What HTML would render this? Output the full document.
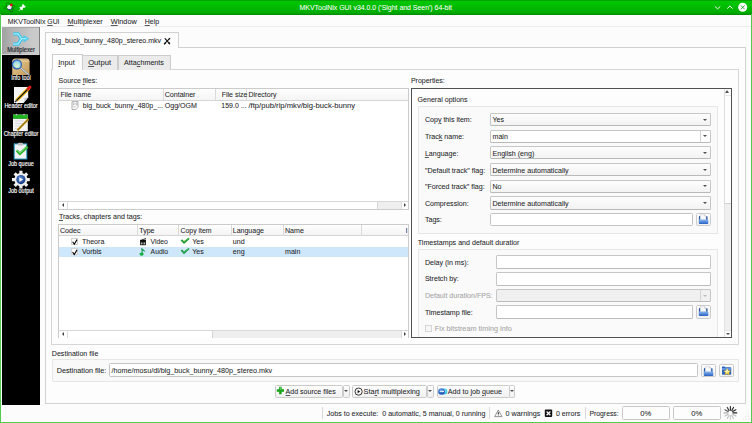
<!DOCTYPE html>
<html><head><meta charset="utf-8">
<style>
*{margin:0;padding:0;box-sizing:border-box}
html,body{width:752px;height:423px;overflow:hidden;background:#fcfcfc;font-family:"Liberation Sans",sans-serif;font-size:7.1px;color:#232527}
.t{-webkit-text-stroke:0.05px currentColor}
div,span{position:absolute}
.t{white-space:pre;line-height:11px;height:11px}
.w{color:#fff}
.b{border:1px solid #c9c9c9}
u{text-decoration-color:#555;text-underline-offset:1px}
.arr{width:0;height:0;border-left:2.3px solid transparent;border-right:2.3px solid transparent;border-top:2.6px solid #505050}
.dis2{border-top-color:#bbb}
.dis{color:#a4a4a4}
.btn{border:1px solid #cbcbcb;border-radius:1.5px;background:linear-gradient(#fdfdfd,#f1f1f1)}
.arru{width:0;height:0;border-left:2.5px solid transparent;border-right:2.5px solid transparent;border-bottom:3px solid #555}
.sl{font-size:6.6px;text-align:center;transform:scaleX(0.83);transform-origin:30px 0;-webkit-text-stroke:0.15px currentColor}
.arrl{width:0;height:0;border-top:2px solid transparent;border-bottom:2px solid transparent;border-right:2.5px solid #444}
.arrr{width:0;height:0;border-top:2px solid transparent;border-bottom:2px solid transparent;border-left:2.5px solid #444}
.fold{width:9px;height:8px}
</style></head><body>

<!-- title bar -->
<div style="left:0;top:0;width:752px;height:15px;background:linear-gradient(#00a000 0px,#00a400 1px,#00c600 1.5px,#00c200 4px,#00aa00 13px,#009200 14px,#008c00 15px)"></div>
<div class="t w" style="left:299.6px;top:2px;font-size:6.93px">MKVToolNix GUI v34.0.0 ('Sight and Seen') 64-bit</div>

<!-- green frame -->
<div style="left:0;top:14px;width:1px;height:409px;background:#52cd52"></div>
<div style="left:751px;top:14px;width:1px;height:409px;background:#52cd52"></div>
<div style="left:0;top:422px;width:752px;height:1px;background:#52cd52"></div>

<!-- menu -->
<div class="t" style="left:7.8px;top:15.7px;font-size:6.9px">MKVToolNix <u>G</u>UI</div>
<div class="t" style="left:67.5px;top:15.7px;font-size:7.3px"><u>M</u>ultiplexer</div>
<div class="t" style="left:110.8px;top:15.7px;font-size:7.3px"><u>W</u>indow</div>
<div class="t" style="left:144.7px;top:15.7px;font-size:7px"><u>H</u>elp</div>

<div style="left:1px;top:26px;width:750px;height:1px;background:#ededed"></div>
<!-- sidebar -->
<div style="left:2px;top:27px;width:38px;height:378px;background:#000"></div>
<div style="left:2px;top:27px;width:38px;height:28px;background:linear-gradient(90deg,#a0a0a0,#b2b2b2 25%,#c9c9c9 80%,#cccccc)"></div><div style="left:2px;top:54px;width:37px;height:1px;background:#cfcfcf"></div>
<div style="left:39px;top:27px;width:1px;height:28px;background:#7d7d7d"></div><div style="left:2px;top:27px;width:37px;height:1px;background:#a8a8a8"></div>

<!-- document tab -->
<div style="left:45px;top:32px;width:134px;height:16px;background:#fdfdfd;border:1px solid #d2d2d2;border-bottom:none"></div>
<div style="left:45px;top:47px;width:701px;height:357px;border:1px solid #d2d2d2;background:#fdfdfd"></div>
<div style="left:46px;top:46px;width:132px;height:2px;background:#fdfdfd"></div>
<div class="t" style="left:51.8px;top:35.4px;font-size:7.05px">big_buck_bunny_480p_stereo.mkv</div>


<!-- inner tabs -->
<div style="left:51px;top:69px;width:688px;height:275.5px;border:1px solid #d6d6d6;background:#fdfdfd"></div>
<div style="left:82px;top:55px;width:36px;height:14.5px;border:1px solid #cdcdcd;border-bottom:none;background:#ebebeb"></div>
<div style="left:117.5px;top:55px;width:53.5px;height:14.5px;border:1px solid #cdcdcd;border-bottom:none;background:#ebebeb"></div>
<div style="left:51.5px;top:54px;width:31px;height:16px;border:1px solid #cdcdcd;border-bottom:none;background:#fdfdfd"></div>
<div class="t" style="left:58.3px;top:57px;font-size:7.4px"><u>I</u>nput</div>
<div class="t" style="left:88.2px;top:57px;font-size:7.6px"><u>O</u>utput</div>
<div class="t" style="left:124px;top:57px;font-size:7.2px">Atta<u>c</u>hments</div>

<!-- source files -->
<div class="t" style="left:58.6px;top:75px;font-size:7px">Source <u>f</u>iles:</div>
<div style="left:58px;top:88px;width:351px;height:121.5px;border:1px solid #cbcbcb;background:#fff"></div>
<div style="left:59px;top:89px;width:349px;height:12px;background:linear-gradient(#fefefe,#f4f4f4);border-bottom:1px solid #d6d6d6"></div>
<div style="left:163px;top:89px;width:1px;height:11px;background:#dadada"></div>
<div style="left:215px;top:89px;width:1px;height:11px;background:#dadada"></div>
<div style="left:246px;top:89px;width:1px;height:11px;background:#dadada"></div>
<div class="t" style="left:60.4px;top:89px;font-size:7px">File name</div>
<div class="t" style="left:164.7px;top:89.8px;font-size:7.1px">Container</div>
<div class="t" style="left:221.7px;top:89px;font-size:7px">File size</div>
<div class="t" style="left:248.5px;top:89px;font-size:7px">Directory</div>
<div class="t" style="left:82.8px;top:100px;font-size:7px">big_buck_bunny_480p_...</div>
<div class="t" style="left:164.7px;top:100.7px;font-size:7.1px">Ogg/OGM</div>
<div class="t" style="left:221.3px;top:100px;font-size:7px">159.0 ...</div>
<div class="t" style="left:248.5px;top:100px;font-size:7.65px">/ftp/pub/rip/mkv/big-buck-bunny</div>
<!-- h scrollbar -->
<div style="left:59px;top:201px;width:349px;height:8px;border-top:1px solid #d8d8d8;background:#fff"></div>
<div style="left:66.5px;top:201px;width:1px;height:8px;background:#dcdcdc"></div>
<div style="left:377px;top:202px;width:24px;height:6.5px;background:#efefef;border-left:1px solid #d6d6d6"></div>
<div style="left:401px;top:201px;width:1px;height:8px;background:#dcdcdc"></div>

<div class="t" style="left:58.9px;top:211.7px;font-size:7.1px"><u>T</u>racks, chapters and tags:</div>
<div style="left:58px;top:224.3px;width:351px;height:114px;border:1px solid #cbcbcb;background:#fff"></div>
<div style="left:59px;top:225.3px;width:349px;height:10.7px;background:linear-gradient(#fefefe,#f4f4f4);border-bottom:1px solid #d6d6d6"></div>
<div style="left:137px;top:225px;width:1px;height:10.5px;background:#dadada"></div>
<div style="left:178px;top:225px;width:1px;height:10.5px;background:#dadada"></div>
<div style="left:231px;top:225px;width:1px;height:10.5px;background:#dadada"></div>
<div style="left:283px;top:225px;width:1px;height:10.5px;background:#dadada"></div>
<div style="left:361px;top:225px;width:1px;height:10.5px;background:#dadada"></div>
<div class="t" style="left:60px;top:226px;font-size:7.1px">Codec</div>
<div class="t" style="left:139.2px;top:226px;font-size:7.1px">Type</div>
<div class="t" style="left:180.5px;top:225.3px;font-size:6.9px">Copy item</div>
<div class="t" style="left:232.8px;top:225.3px;font-size:7px">Language</div>
<div class="t" style="left:285px;top:226px;font-size:7.1px">Name</div>
<div style="left:59px;top:246.5px;width:349px;height:10px;background:#cfe7fa"></div>
<div class="t" style="left:81.9px;top:236.6px;font-size:7.1px">Theora</div>
<div class="t" style="left:150.6px;top:235.6px;font-size:6.8px">Video</div>
<div class="t" style="left:192.2px;top:236.6px;font-size:7.1px">Yes</div>
<div class="t" style="left:232.8px;top:236.6px;font-size:7.1px">und</div>
<div class="t" style="left:81.9px;top:246.8px;font-size:7.1px">Vorbis</div>
<div class="t" style="left:150.6px;top:245.8px;font-size:6.8px">Audio</div>
<div class="t" style="left:192.2px;top:246.8px;font-size:7.1px">Yes</div>
<div class="t" style="left:232.8px;top:246.8px;font-size:7.1px">eng</div>
<div class="t" style="left:285px;top:246.8px;font-size:7.1px">main</div>
<div style="left:59px;top:330px;width:349px;height:8px;border-top:1px solid #d8d8d8;background:#fff"></div>
<div style="left:66.5px;top:330px;width:1px;height:8px;background:#dcdcdc"></div>
<div style="left:212px;top:331px;width:189px;height:6.5px;background:#efefef;border-left:1px solid #d6d6d6"></div>
<div style="left:401px;top:330px;width:1px;height:8px;background:#dcdcdc"></div>

<div class="arrl" style="left:61.5px;top:203.3px"></div>
<div class="arrr" style="left:403.8px;top:203.3px"></div>
<div class="arrl" style="left:61.5px;top:332.3px"></div>
<div class="arrr" style="left:403.8px;top:332.3px"></div>
<div class="t" style="left:405.5px;top:226px;font-size:7.1px;width:3px;overflow:hidden">I</div>

<!-- properties -->
<div class="t" style="left:410.9px;top:74.7px;font-size:7px">Properties:</div>
<div style="left:411px;top:88px;width:321px;height:249.5px;border:1px solid #4f5254;background:#fdfdfd"></div>
<div class="t" style="left:417.5px;top:95px;font-size:7.1px">General options</div>
<div style="left:418px;top:106.3px;width:300px;height:127.8px;border:1px solid #e6e6e6;background:#fafafa"></div>
<div class="t" style="left:417.8px;top:237.8px;font-size:7.1px">Timestamps and default duratior</div>
<div style="left:418px;top:248.5px;width:300px;height:90px;border:1px solid #e6e6e6;background:#fafafa"></div>
<div class="t" style="left:424.9px;top:114.9px;font-size:7.08px">Cop<u>y</u> this item:</div>
<div class="t" style="left:424.9px;top:132px;font-size:7.1px">Trac<u>k</u> name:</div>
<div class="t" style="left:424.9px;top:149px;font-size:7.1px"><u>L</u>anguage:</div>
<div class="t" style="left:424.9px;top:166px;font-size:7.1px">"Default track" flag:</div>
<div class="t" style="left:424.9px;top:182px;font-size:7.1px">"Forced track" flag:</div>
<div class="t" style="left:424.9px;top:199px;font-size:7.1px">Compression:</div>
<div class="t" style="left:424.9px;top:214.9px;font-size:7.1px">Tags:</div>
<div style="left:489.9px;top:113.1px;width:221.2px;height:13.3px;border:1px solid #c6c6c6;border-bottom-color:#b9b9b9;border-radius:1.5px;background:linear-gradient(#fdfdfd,#f3f3f3)"></div>
<div class="t" style="left:492.5px;top:114.7px;font-size:7.1px">Yes</div>
<div class="arr" style="left:702.8px;top:118.6px"></div>
<div style="left:489.9px;top:129.5px;width:221.2px;height:13.3px;border:1px solid #c6c6c6;border-bottom-color:#b9b9b9;border-radius:1.5px;background:#fff"></div>
<div class="t" style="left:492.5px;top:132px;font-size:7.1px">main</div>
<div class="arr" style="left:702.8px;top:135.0px"></div>
<div style="left:700px;top:130.5px;width:1px;height:11.3px;background:#d4d4d4"></div>
<div style="left:489.9px;top:146.1px;width:221.2px;height:13.3px;border:1px solid #c6c6c6;border-bottom-color:#b9b9b9;border-radius:1.5px;background:linear-gradient(#fdfdfd,#f3f3f3)"></div>
<div class="t" style="left:492.5px;top:149px;font-size:7.1px">English (eng)</div>
<div class="arr" style="left:702.8px;top:151.6px"></div>
<div style="left:489.9px;top:163.1px;width:221.2px;height:13.3px;border:1px solid #c6c6c6;border-bottom-color:#b9b9b9;border-radius:1.5px;background:linear-gradient(#fdfdfd,#f3f3f3)"></div>
<div class="t" style="left:492.5px;top:166px;font-size:7.1px">Determine automatically</div>
<div class="arr" style="left:702.8px;top:168.6px"></div>
<div style="left:489.9px;top:179.6px;width:221.2px;height:13.3px;border:1px solid #c6c6c6;border-bottom-color:#b9b9b9;border-radius:1.5px;background:linear-gradient(#fdfdfd,#f3f3f3)"></div>
<div class="t" style="left:492.5px;top:182px;font-size:7.1px">No</div>
<div class="arr" style="left:702.8px;top:185.1px"></div>
<div style="left:489.9px;top:196.4px;width:221.2px;height:13.3px;border:1px solid #c6c6c6;border-bottom-color:#b9b9b9;border-radius:1.5px;background:linear-gradient(#fdfdfd,#f3f3f3)"></div>
<div class="t" style="left:492.5px;top:199px;font-size:7.1px">Determine automatically</div>
<div class="arr" style="left:702.8px;top:201.9px"></div>
<div style="left:489.9px;top:213.3px;width:203.4px;height:13.2px;border:1px solid #c4c4c4;border-radius:1.5px;background:#fff"></div>
<div class="btn" style="left:696px;top:213px;width:14.5px;height:13px"></div>
<div class="fold" style="left:699px;top:216px"></div>
<div class="t " style="left:424.9px;top:257.7px">Delay (in ms):</div>
<div class="t " style="left:424.9px;top:274.0px">Stretch by:</div>
<div class="t dis" style="left:424.9px;top:291.1px">Default duration/FPS:</div>
<div class="t " style="left:424.9px;top:307.8px">Timestamp file:</div>
<div style="left:496px;top:255.4px;width:215px;height:13.6px;border:1px solid #c6c6c6;border-bottom-color:#bcbcbc;border-radius:1.5px;background:#fff"></div>
<div style="left:496px;top:272px;width:215px;height:13.6px;border:1px solid #c6c6c6;border-bottom-color:#bcbcbc;border-radius:1.5px;background:#fff"></div>
<div style="left:496px;top:289px;width:215px;height:13.3px;border:1px solid #c6c6c6;border-bottom-color:#bcbcbc;border-radius:1.5px;background:#f0f0f0"></div>
<div style="left:496px;top:305.1px;width:196.6px;height:13.6px;border:1px solid #c6c6c6;border-bottom-color:#bcbcbc;border-radius:1.5px;background:#fff"></div>
<div style="left:700px;top:290px;width:1px;height:11.3px;background:#d4d4d4"></div>
<div class="arr dis2" style="left:702.8px;top:294.5px"></div>
<div class="btn" style="left:696px;top:305px;width:14.5px;height:13.5px"></div>
<div class="fold" style="left:699px;top:308px"></div>
<div style="left:424.5px;top:325.1px;width:7.3px;height:6.8px;border:1px solid #d6d6d6;background:#f6f6f6"></div>
<div class="t dis" style="left:434.8px;top:323.4px;font-size:7.3px">Fix bitstream timing info</div>
<div style="left:412px;top:337px;width:319px;height:6px;background:#fdfdfd"></div>
<div style="left:411px;top:336.5px;width:321px;height:1px;background:#4f5254"></div>


<!-- properties scrollbar -->
<div style="left:724px;top:89px;width:7px;height:247.5px;background:#f0f0f0;border-left:1px solid #e2e2e2"></div>
<div style="left:724px;top:89px;width:7px;height:114.5px;background:#fdfdfd;border-left:1px solid #dedede;border-bottom:1px solid #d2d2d2"></div>
<div style="left:725px;top:95px;width:6px;height:1px;background:#e6e6e6"></div>
<div class="arru" style="left:725.3px;top:90.3px"></div>
<div style="left:725px;top:330px;width:6px;height:6.5px;background:#fdfdfd;border-top:1px solid #e0e0e0"></div>
<div class="arr" style="left:725.5px;top:333px"></div>

<!-- destination -->
<div class="t" style="left:51.8px;top:348.6px;font-size:7.1px">Destination file</div>
<div style="left:52px;top:359px;width:686.5px;height:22.5px;border:1px solid #e6e6e6;border-radius:1px;background:#f9f9f9"></div>
<div class="t" style="left:56.7px;top:364.7px;font-size:7.25px">Destination file:</div>
<div style="left:109.2px;top:363.4px;width:588.8px;height:13.3px;border:1px solid #c4c4c4;border-radius:1.5px;background:#fff"></div>
<div class="t" style="left:111.6px;top:364.5px;font-size:7.2px">/home/mosu/dl/big_buck_bunny_480p_stereo.mkv</div>
<div class="btn" style="left:701.4px;top:364.4px;width:14.3px;height:12.2px"></div>
<div class="btn" style="left:719.2px;top:364.4px;width:14.5px;height:12.2px"></div>

<!-- action buttons -->
<div class="btn" style="left:274.5px;top:385px;width:68.5px;height:13px"></div>
<div class="btn" style="left:342.5px;top:385px;width:7px;height:13px"></div>
<div class="arr" style="left:343.6px;top:390.3px;border-left-width:2px;border-right-width:2px;border-top-width:2.5px"></div>
<div class="t" style="left:285.6px;top:385.8px;font-size:7.05px"><u>A</u>dd source files</div>
<div class="btn" style="left:352px;top:385px;width:75px;height:13px"></div>
<div class="btn" style="left:426.5px;top:385px;width:7px;height:13px"></div>
<div class="arr" style="left:427.6px;top:390.3px;border-left-width:2px;border-right-width:2px;border-top-width:2.5px"></div>
<div class="t" style="left:363.6px;top:385.8px;font-size:7.35px">Sta<u>r</u>t multiplexing</div>
<div class="btn" style="left:436.5px;top:385px;width:73px;height:13px"></div>
<div class="btn" style="left:509px;top:385px;width:6px;height:13px"></div>
<div class="arr" style="left:509.9px;top:390.3px;border-left-width:2px;border-right-width:2px;border-top-width:2.5px"></div>
<div class="t" style="left:447.7px;top:386.8px;font-size:7.18px">Add to job <u>q</u>ueue</div>

<!-- status bar -->
<div style="left:322px;top:406.8px;width:1px;height:12px;background:#dadada"></div>
<div style="left:489px;top:406.8px;width:1px;height:12px;background:#dadada"></div>
<div style="left:584.5px;top:406.8px;width:1px;height:12px;background:#dadada"></div>
<div class="t" style="left:326.8px;top:408.6px;font-size:7.09px">Jobs to execute:  0 automatic, 5 manual, 0 running</div>
<div class="t" style="left:505.6px;top:407.6px;font-size:7.2px">0 warnings</div>
<div class="t" style="left:555.9px;top:408.6px;font-size:7.1px">0 errors</div>
<div class="t" style="left:589.4px;top:407.6px;font-size:6.85px">Progress:</div>
<div style="left:622px;top:406px;width:48px;height:13.5px;border:1px solid #c8c8c8;border-radius:1.5px;background:#fdfdfd"></div>
<div class="t" style="left:622.2px;top:408.1px;width:47.2px;text-align:center;font-size:7.7px">0%</div>
<div style="left:673px;top:406px;width:48px;height:13.5px;border:1px solid #c8c8c8;border-radius:1.5px;background:#fdfdfd"></div>
<div class="t" style="left:673.1px;top:408.1px;width:47.5px;text-align:center;font-size:7.7px">0%</div>


<!-- ===== ICONS ===== -->
<!-- title bar icons -->
<svg style="position:absolute;left:3px;top:0px" width="14" height="14" viewBox="0 0 14 14">
 <ellipse cx="6.6" cy="7.2" rx="2.3" ry="5.3" transform="rotate(-30 6.6 7.2)" fill="none" stroke="#0a5a0a" stroke-width="0.7" opacity="0.85"/>
 <ellipse cx="6.6" cy="7.2" rx="5.6" ry="1.7" transform="rotate(-12 6.6 7.2)" fill="none" stroke="#0a5a0a" stroke-width="0.6" opacity="0.7"/>
 <circle cx="6.5" cy="7.3" r="2.4" fill="#f6f0fc"/>
 <path d="M4.6 8.8 A2.4 2.4 0 0 0 8.9 7.3" fill="none" stroke="#2b2e8c" stroke-width="0.9"/>
 <circle cx="8.3" cy="4.9" r="1.3" fill="#ec0010"/>
</svg>
<svg style="position:absolute;left:18px;top:3px" width="9" height="9" viewBox="0 0 9 9">
 <path d="M4.9 1.3 L7.4 3.8 L6.6 4.4 L5.6 4.3 L4.5 5.5 L4.6 6.6 L4 7.1 L1.7 4.8 L2.2 4.2 L3.3 4.3 L4.5 3.1 L4.4 2.1 Z" fill="#fff" stroke="#fff" stroke-width="0.7" stroke-linejoin="round"/>
 <path d="M2.6 6.2 L1.2 7.6" stroke="#fff" stroke-width="1"/>
</svg>
<svg style="position:absolute;left:713px;top:4px" width="36" height="8" viewBox="0 0 36 8">
 <path d="M1.9 2.4 L4.6 4.9 L7.3 2.4" fill="none" stroke="#fff" stroke-width="0.95"/>
 <path d="M14.2 4.6 L16.9 2 L19.6 4.6" fill="none" stroke="#fff" stroke-width="0.95"/>
</svg>
<svg style="position:absolute;left:737px;top:2px" width="12" height="11" viewBox="0 0 12 11">
 <circle cx="5.7" cy="5.3" r="4.5" fill="#fff"/>
 <path d="M3.7 3.3 L7.7 7.3 M7.7 3.3 L3.7 7.3" stroke="#109a10" stroke-width="0.8"/>
</svg>

<!-- sidebar icons & labels -->
<svg style="position:absolute;left:11px;top:31px" width="20" height="16" viewBox="0 0 20 16">
 <path d="M2.2 2.8 H7 L10.6 7.7 L7 13.1 H2.2" fill="none" stroke="#3fbfe6" stroke-width="3.3" stroke-linejoin="miter" stroke-miterlimit="3"/>
 <path d="M10 7.7 H14" stroke="#3fbfe6" stroke-width="3.3"/>
 <path d="M12.6 4.1 L18.3 7.7 L12.6 11.4 Z" fill="#4ccbee"/>
 <path d="M2.4 2.8 H7 L10.6 7.7 L7 13.1 H2.4 M10.6 7.7 H15.5" fill="none" stroke="#9ff0ff" stroke-width="1.2"/>
</svg>
<div class="t sl" style="left:-9.5px;top:44.3px;width:60px;color:#1c1c28;font-weight:normal;font-size:6.5px;transform:scaleX(0.88)">Multiplexer</div>

<svg style="position:absolute;left:11px;top:57px" width="20" height="19" viewBox="0 0 20 19">
 <defs><linearGradient id="box" x1="0" y1="0" x2="1" y2="1"><stop offset="0" stop-color="#e6cc96"/><stop offset="1" stop-color="#c49a58"/></linearGradient>
 <radialGradient id="lens" cx="0.5" cy="0.65" r="0.6"><stop offset="0" stop-color="#e0f4c8"/><stop offset="0.6" stop-color="#a8e0e0"/><stop offset="1" stop-color="#6cb8e8"/></radialGradient></defs>
 <path d="M1.2 4 Q1.5 1.6 4 1.4 H16 Q18.4 1.6 18.6 4 V17.9 H1.2 Z" fill="url(#box)"/>
 <path d="M1.4 4.2 H18.4" stroke="#f2e2bc" stroke-width="0.6"/>
 <path d="M9.6 10.8 L17.4 17.6" stroke="#8d959c" stroke-width="2" stroke-linecap="round"/>
 <path d="M9.6 10.8 L17.2 17.3" stroke="#eef2f4" stroke-width="0.7" stroke-linecap="round"/>
 <circle cx="5.9" cy="7.4" r="4.5" fill="url(#lens)" stroke="#2f62b8" stroke-width="1.3"/>
</svg>
<div class="t sl w" style="left:-9.5px;top:71.7px;width:60px">Info tool</div>

<svg style="position:absolute;left:13px;top:85px" width="19" height="19" viewBox="0 0 19 19">
 <path d="M1 2 H15.2 V12.2 L10.6 17.9 H1 Z" fill="#f6f6f8"/>
 <path d="M10.6 17.9 L15.2 12.2 L11.6 13 Z" fill="#c8cad2"/>
 <path d="M3.4 15.6 L16 3" stroke="#e9b81c" stroke-width="3.4"/>
 <path d="M3.4 15.6 L16 3" stroke="#111" stroke-width="1.3"/>
 <path d="M15.2 3.8 L16.9 2.1" stroke="#e31a1a" stroke-width="3" stroke-linecap="round"/>
 <path d="M1.9 17.1 L3.6 15.4" stroke="#333" stroke-width="1.4"/>
</svg>
<div class="t sl w" style="left:-9.5px;top:100px;width:60px">Header editor</div>

<svg style="position:absolute;left:12px;top:113px" width="19" height="19" viewBox="0 0 19 19">
 <rect x="1" y="1.6" width="14.8" height="16.6" fill="#f6f6f6"/>
 <rect x="1" y="1.6" width="14.8" height="4" fill="#22b722"/>
 <rect x="1" y="4.8" width="14.8" height="0.8" fill="#1a8f1a"/>
 <circle cx="4.5" cy="1.6" r="0.8" fill="#d9b6e0"/><circle cx="12" cy="1.6" r="0.8" fill="#d9b6e0"/>
 <path d="M2.8 8 H12 M2.8 10.5 H12 M2.8 13 H10 M2.8 15.5 H9" stroke="#c6c6d4" stroke-width="0.6"/>
 <path d="M5.5 17.2 L16.5 6" stroke="#d9a812" stroke-width="2.2"/>
 <path d="M5.5 17.2 L16.5 6" stroke="#2a2a2a" stroke-width="0.7"/>
</svg>
<div class="t sl w" style="left:-9.5px;top:128.3px;width:60px">Chapter editor</div>

<svg style="position:absolute;left:13px;top:142px" width="17" height="18" viewBox="0 0 17 18">
 <rect x="1.2" y="1.9" width="12.6" height="15.1" fill="#f3f3f5" stroke="#2aa0c8" stroke-width="1"/>
 <rect x="5" y="0.8" width="5" height="2.6" rx="1" fill="#bdbdbd"/>
 <path d="M3.7 8.4 L6.8 11.8 L14.6 4.8" fill="none" stroke="#2fb52f" stroke-width="2.6" stroke-linejoin="round"/>
 <path d="M4.5 8.6 L6.8 11 L13.8 4.9" fill="none" stroke="#8ee08e" stroke-width="0.8"/>
</svg>
<div class="t sl w" style="left:-9.5px;top:157.5px;width:60px">Job queue</div>

<svg style="position:absolute;left:11px;top:170px" width="20" height="19" viewBox="0 0 20 19">
 <g transform="translate(9.9 9.6)" fill="#efefef">
  <circle r="6.6"/>
  <rect x="-1.6" y="-8.9" width="3.2" height="17.8"/>
  <rect x="-1.6" y="-8.9" width="3.2" height="17.8" transform="rotate(45)"/>
  <rect x="-1.6" y="-8.9" width="3.2" height="17.8" transform="rotate(90)"/>
  <rect x="-1.6" y="-8.9" width="3.2" height="17.8" transform="rotate(135)"/>
 </g>
 <defs><radialGradient id="bl" cx="0.45" cy="0.35" r="0.7"><stop offset="0" stop-color="#5c8fd6"/><stop offset="1" stop-color="#0c2a78"/></radialGradient></defs>
 <circle cx="9.9" cy="9.6" r="4.6" fill="url(#bl)"/>
 <path d="M8.3 7.3 L12.2 9.6 L8.3 11.9 Z" fill="#f4f4f4"/>
</svg>
<div class="t sl w" style="left:-9.5px;top:185.3px;width:60px">Job output</div>

<!-- doc tab close -->
<svg style="position:absolute;left:163px;top:36.5px" width="8" height="8" viewBox="0 0 8 8">
 <path d="M6.8 1.3 Q4.5 3.6 1.4 6.9" fill="none" stroke="#111" stroke-width="1.1" stroke-linecap="round"/>
 <path d="M2.1 1.6 Q4.2 4.2 6.7 6.6" fill="none" stroke="#111" stroke-width="1.1" stroke-linecap="round"/>
 <ellipse cx="1.9" cy="6.4" rx="1.1" ry="0.8" transform="rotate(-40 1.9 6.4)" fill="#111"/>
 <ellipse cx="6.1" cy="6.1" rx="1.2" ry="0.8" transform="rotate(45 6.1 6.1)" fill="#111"/>
 <ellipse cx="6.3" cy="1.8" rx="0.9" ry="0.6" transform="rotate(-45 6.3 1.8)" fill="#111"/>
</svg>

<!-- file icon -->
<svg style="position:absolute;left:71px;top:101px" width="8" height="9" viewBox="0 0 8 9">
 <path d="M1 0.6 H7 V6.3 L4.8 8.5 H1 Z" fill="#fcfcfc" stroke="#a2a2a2" stroke-width="0.85" stroke-linejoin="round"/>
 <path d="M2.2 1.2 V4.4 M5.8 1.2 V4.4 M2.2 3 H5.8 M2.2 5.8 H4.8" fill="none" stroke="#aaa" stroke-width="0.7"/>
</svg>

<!-- track checkboxes -->
<div style="left:71.3px;top:237.7px;width:7px;height:7px;border:1px solid #d2d2d2;background:#fff"></div>
<div style="left:71.3px;top:248px;width:7px;height:7px;border:1px solid #d2d2d2;background:#fff"></div>
<svg style="position:absolute;left:71px;top:237.5px" width="8" height="19" viewBox="0 0 8 19">
 <path d="M1.6 3.8 L3.3 6.2 L6 1.6" fill="none" stroke="#000" stroke-width="1.1"/>
 <path d="M1.6 14.1 L3.3 16.5 L6 11.9" fill="none" stroke="#000" stroke-width="1.1"/>
</svg>
<!-- video / audio -->
<svg style="position:absolute;left:139px;top:236.5px" width="8" height="20" viewBox="0 0 8 20">
 <rect x="1.1" y="3" width="5.8" height="5.2" fill="#0c0c0c"/>
 <rect x="1.9" y="5.4" width="1.6" height="2" fill="#bbb"/><rect x="4.5" y="5.4" width="1.6" height="2" fill="#bbb"/>
 <path d="M1.1 2.9 L6.9 1.1 L7 2.3 L1.2 3.6 Z" fill="#1a1a1a"/>
 <path d="M2.6 2.7 L3.5 1.6 M4.6 2.1 L5.5 1" stroke="#eee" stroke-width="0.5"/>
 <path d="M2.6 11.3 Q3.3 12.4 3.1 16.6" fill="none" stroke="#16985a" stroke-width="1.1"/>
 <path d="M2.7 11.2 Q5.8 12.6 6.6 15.2 Q5.2 14.2 3.2 13.8 Z" fill="#1a9e5a"/>
 <ellipse cx="2.6" cy="17.1" rx="2.1" ry="1.7" fill="#12b040"/>
</svg>
<!-- green checks -->
<svg style="position:absolute;left:180px;top:237px" width="10" height="18" viewBox="0 0 10 18">
 <path d="M0.6 3.4 L2.2 2.2 L3.9 4.2 L8.6 0.7 L9.6 1.9 L4 7 Z" fill="#259a32"/>
 <path d="M3.9 4.2 L8.6 0.7 L9.2 1.3 L4.1 5.2 Z" fill="#4cc04c"/>
 <path d="M0.6 13.6 L2.2 12.4 L3.9 14.4 L8.6 10.9 L9.6 12.1 L4 17.2 Z" fill="#229a4a"/>
 <path d="M3.9 14.4 L8.6 10.9 L9.2 11.5 L4.1 15.4 Z" fill="#3fbf6a"/>
</svg>

<!-- folder buttons -->
<svg width="0" height="0" style="position:absolute"><defs><linearGradient id="fg" x1="0" y1="0" x2="0" y2="1"><stop offset="0" stop-color="#86b6f2"/><stop offset="1" stop-color="#2a62c0"/></linearGradient>
<radialGradient id="stg" cx="0.45" cy="0.35" r="0.7"><stop offset="0" stop-color="#fffbe8"/><stop offset="0.5" stop-color="#ffe45a"/><stop offset="1" stop-color="#e8b000"/></radialGradient></defs></svg>
<svg style="position:absolute;left:698px;top:214px" width="11" height="11" viewBox="0 0 11 11">
 <rect x="0.9" y="2.1" width="8.6" height="7.6" rx="0.8" fill="#1f4f9e"/>
 <path d="M2.2 0.7 H6.6 L8.1 2.2 V6.2 H2.2 Z" fill="#fbfbfb" stroke="#9aa6b8" stroke-width="0.35"/>
 <path d="M6.6 0.7 V2.2 H8.1" fill="none" stroke="#9aa6b8" stroke-width="0.35"/>
 <path d="M0.9 5.6 H9.4 Q10.3 5.6 10.3 6.5 V9 Q10.3 9.9 9.4 9.9 H1.7 Q0.9 9.9 0.9 9.1 Z" fill="url(#fg)"/>
</svg>
<svg style="position:absolute;left:698px;top:306px" width="11" height="11" viewBox="0 0 11 11">
 <rect x="0.9" y="2.1" width="8.6" height="7.6" rx="0.8" fill="#1f4f9e"/>
 <path d="M2.2 0.7 H6.6 L8.1 2.2 V6.2 H2.2 Z" fill="#fbfbfb" stroke="#9aa6b8" stroke-width="0.35"/>
 <path d="M6.6 0.7 V2.2 H8.1" fill="none" stroke="#9aa6b8" stroke-width="0.35"/>
 <path d="M0.9 5.6 H9.4 Q10.3 5.6 10.3 6.5 V9 Q10.3 9.9 9.4 9.9 H1.7 Q0.9 9.9 0.9 9.1 Z" fill="url(#fg)"/>
</svg>
<svg style="position:absolute;left:703px;top:365.5px" width="11" height="11" viewBox="0 0 11 11">
 <rect x="0.9" y="2.1" width="8.6" height="7.6" rx="0.8" fill="#1f4f9e"/>
 <path d="M2.2 0.7 H6.6 L8.1 2.2 V6.2 H2.2 Z" fill="#fbfbfb" stroke="#9aa6b8" stroke-width="0.35"/>
 <path d="M6.6 0.7 V2.2 H8.1" fill="none" stroke="#9aa6b8" stroke-width="0.35"/>
 <path d="M0.9 5.6 H9.4 Q10.3 5.6 10.3 6.5 V9 Q10.3 9.9 9.4 9.9 H1.7 Q0.9 9.9 0.9 9.1 Z" fill="url(#fg)"/>
</svg>
<svg style="position:absolute;left:721px;top:365px" width="11" height="11" viewBox="0 0 11 11">
 <path d="M1 1.4 H3.6 L4.4 2.2 H9.4 Q10.2 2.2 10.2 3 V9 Q10.2 9.8 9.4 9.8 H1.8 Q1 9.8 1 9 Z" fill="#2d64c0"/>
 <rect x="1" y="3.2" width="9.2" height="1.6" fill="#6a9ee8"/>
 <path d="M6.2 3.3 L7.3 5.6 L9.8 5.9 L7.9 7.6 L8.4 10.1 L6.2 8.8 L4 10.1 L4.5 7.6 L2.6 5.9 L5.1 5.6 Z" fill="url(#stg)" stroke="#d9a400" stroke-width="0.25"/>
</svg>
<!-- button icons -->
<svg style="position:absolute;left:276px;top:386px" width="9" height="9" viewBox="0 0 9 9">
 <path d="M4.4 0.7 V8.3 M0.8 4.5 H8" stroke="#17a317" stroke-width="2.5"/>
 <path d="M4.4 1 V4" stroke="#6fd36f" stroke-width="0.8"/>
</svg>
<svg style="position:absolute;left:353.5px;top:386.5px" width="9" height="9" viewBox="0 0 9 9">
 <circle cx="4.6" cy="4.6" r="3.6" fill="none" stroke="#222" stroke-width="0.9"/>
 <path d="M3.6 2.9 L6.2 4.6 L3.6 6.3 Z" fill="#111"/>
</svg>
<svg style="position:absolute;left:437.5px;top:387px" width="10" height="9" viewBox="0 0 10 9">
 <defs><radialGradient id="cy" cx="0.4" cy="0.4" r="0.7"><stop offset="0" stop-color="#a6f2ff"/><stop offset="1" stop-color="#18b8e0"/></radialGradient>
 <radialGradient id="bq" cx="0.4" cy="0.3" r="0.75"><stop offset="0" stop-color="#6aa4ee"/><stop offset="1" stop-color="#0a3fa8"/></radialGradient></defs>
 <circle cx="6.3" cy="4.5" r="3" fill="url(#cy)"/>
 <circle cx="3.5" cy="4.5" r="3.3" fill="url(#bq)"/>
 <path d="M1.8 4.4 H6" stroke="#f2f6ff" stroke-width="1"/>
 <path d="M4.6 3.3 L6.2 4.4 L4.6 5.5" fill="#f2f6ff"/>
</svg>

<!-- status icons -->
<svg style="position:absolute;left:494px;top:409px" width="9" height="9" viewBox="0 0 9 9">
 <path d="M4.3 1 L8 7.6 H0.7 Z" fill="none" stroke="#7a7a7a" stroke-width="0.8" stroke-linejoin="round"/>
 <path d="M4.3 3.2 V5.5" stroke="#222" stroke-width="1"/>
 <circle cx="4.3" cy="6.6" r="0.45" fill="#333"/>
</svg>
<svg style="position:absolute;left:544px;top:408.5px" width="9" height="9" viewBox="0 0 9 9">
 <rect x="0.8" y="0.6" width="7.4" height="7.4" rx="1" fill="#111"/>
 <path d="M2.6 2.5 L6.4 6.2 M6.4 2.5 L2.6 6.2" stroke="#fff" stroke-width="1.2"/>
</svg>
<svg style="position:absolute;left:723px;top:406px" width="15" height="14" viewBox="0 0 15 14">
 <g transform="translate(7.4 6.9)" stroke-width="1.1" stroke-linecap="round">
  <path d="M0 -2.6 V-6.3" stroke="#222" transform="rotate(0)"/>
  <path d="M0 -2.6 V-6.3" stroke="#222" transform="rotate(30)"/>
  <path d="M0 -2.6 V-6.3" stroke="#222" transform="rotate(60)"/>
  <path d="M0 -2.6 V-6.3" stroke="#222" transform="rotate(90)"/>
  <path d="M0 -2.6 V-6.3" stroke="#bbb" transform="rotate(120)"/>
  <path d="M0 -2.6 V-6.3" stroke="#c4c4c4" transform="rotate(150)"/>
  <path d="M0 -2.6 V-6.3" stroke="#c8c8c8" transform="rotate(180)"/>
  <path d="M0 -2.6 V-6.3" stroke="#c4c4c4" transform="rotate(210)"/>
  <path d="M0 -2.6 V-6.3" stroke="#bdbdbd" transform="rotate(240)"/>
  <path d="M0 -2.6 V-6.3" stroke="#aaa" transform="rotate(270)"/>
  <path d="M0 -2.6 V-6.3" stroke="#555" transform="rotate(300)"/>
  <path d="M0 -2.6 V-6.3" stroke="#333" transform="rotate(330)"/>
 </g>
</svg>
<svg style="position:absolute;left:743px;top:412px" width="8" height="9" viewBox="0 0 8 9">
 <g fill="#c8c8c8"><circle cx="5.5" cy="2" r="0.4"/><circle cx="5.5" cy="4.5" r="0.4"/><circle cx="3" cy="4.5" r="0.4"/><circle cx="5.5" cy="7" r="0.4"/><circle cx="3" cy="7" r="0.4"/><circle cx="0.5" cy="7" r="0.4"/></g>
</svg>

</body></html>
